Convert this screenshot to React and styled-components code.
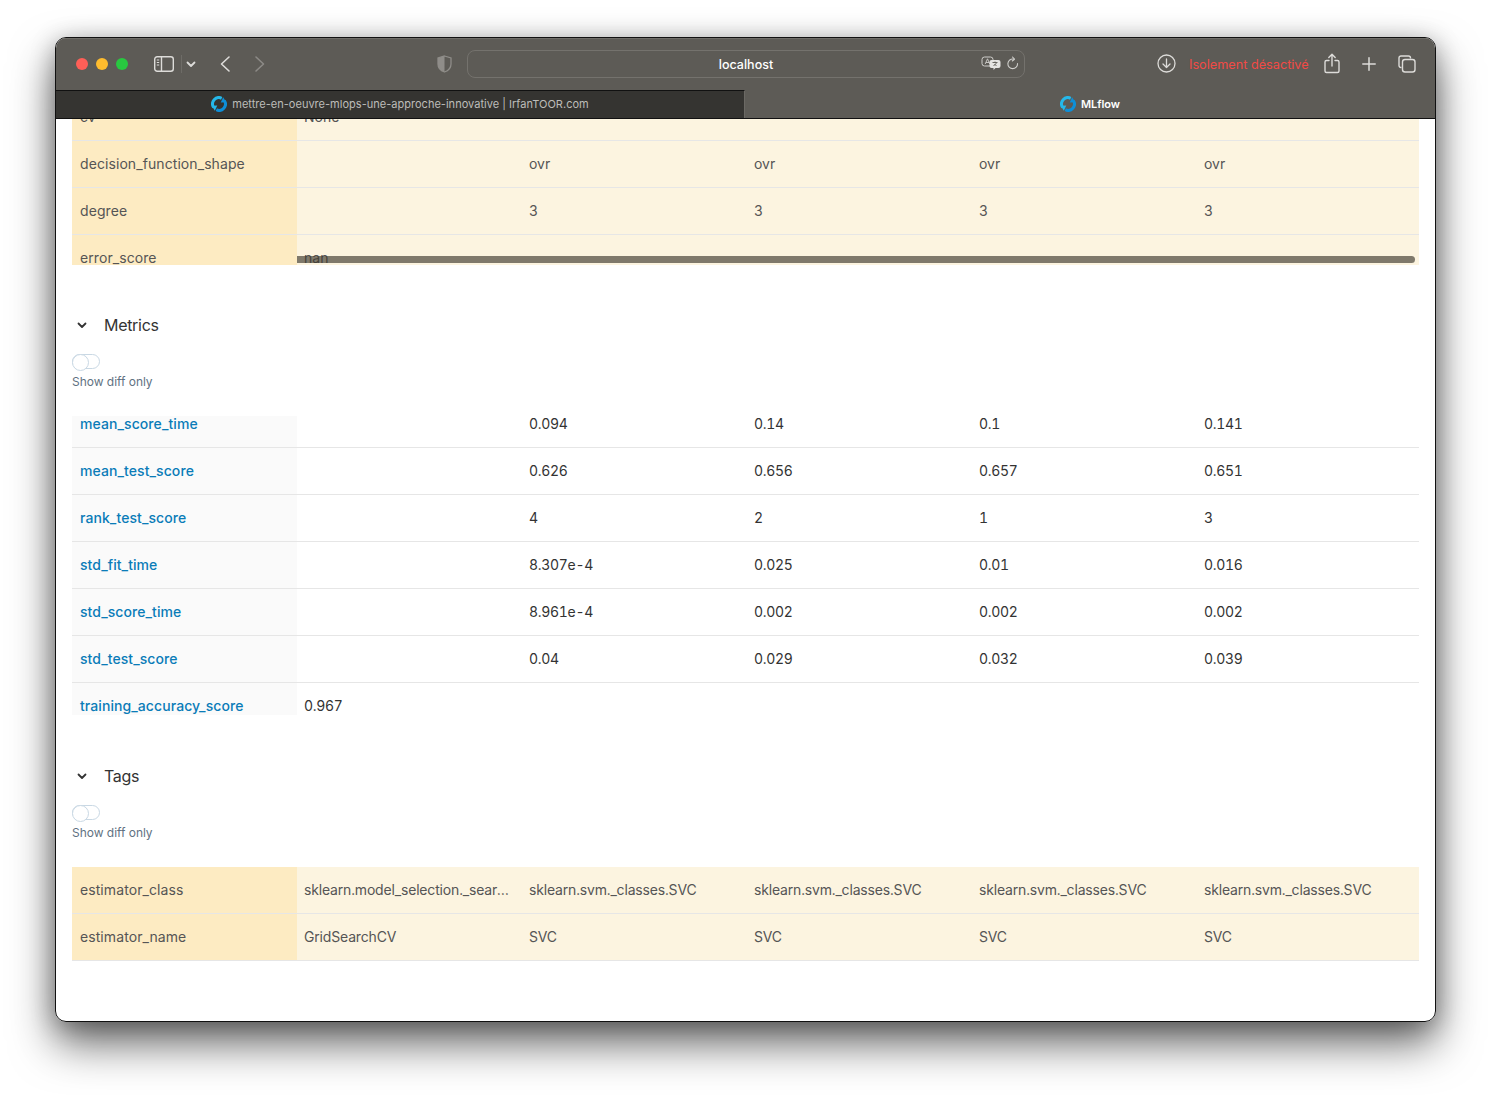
import React from "react";
import styled, { createGlobalStyle } from "styled-components";

const Global = createGlobalStyle`
  html, body { margin: 0; padding: 0; background: #fff; }
  body { font-family: Inter, "Liberation Sans", sans-serif; overflow: hidden; }
  * { box-sizing: border-box; }
`;
const Stage = styled.div`width: 1491px; height: 1095px; padding: 37px 55px 73px;`;
const Win = styled.div`
  width: 1381px; height: 985px; border: 1px solid #111; border-radius: 11px;
  overflow: hidden; background: #fff; display: flex; flex-direction: column;
`;
const Shadow = styled.div`border-radius: 11px; box-shadow: 0 22px 44px rgba(0,0,0,.58), 0 4px 24px rgba(0,0,0,.28);`;
const Toolbar = styled.div`
  height: 52px; padding-bottom: 2px; background: #5d5b56; display: flex; align-items: center; flex: none;
  border-top: 1px solid #6f6d68;
`;
const Lights = styled.div`display: flex; gap: 8px; margin-left: 20px; width: 78px;`;
const Light = styled.span`width: 12px; height: 12px; border-radius: 50%; background: ${p => p.$c};`;
const IconSlot = styled.span`
  display: flex; align-items: center; justify-content: center; flex: none;
  width: ${p => p.$w}px; margin-left: ${p => p.$ml || 0}px; color: ${p => p.$c || "#dddcd9"};
`;
const Divider = styled.span`width: 1px; height: 18px; margin-left: 7px; background: #6e6c67; flex: none;`;
const Url = styled.div`
  width: 558px; height: 28px; margin-left: 15px; padding-top: 1px; flex: none; border: 1px solid #74726d; border-radius: 8px;
  display: flex; align-items: center; position: relative; justify-content: center;
  color: #fff; font-size: 12.5px; font-weight: 500;
`;
const UrlIcons = styled.div`position: absolute; right: 5px; top: 5px; display: flex; align-items: center; gap: 6px; color: #cfcecb;`;
const Isolement = styled.span`color: #f24a45; font-size: 12.7px; padding-top: 1px; margin-left: 13px; width: 120px; white-space: nowrap; flex: none;`;
const Tabs = styled.div`height: 29px; display: flex; flex: none; border-bottom: 1px solid #111; background: #5d5b56;`;
const Tab = styled.div`
  width: ${p => p.$active ? 690 : 689}px; display: flex; align-items: center; justify-content: center; gap: 5px;
  font-size: 11px; white-space: nowrap; letter-spacing: ${p => p.$active ? "-.05px" : ".02px"};
  padding-bottom: ${p => p.$active ? 0 : 1}px;
  color: ${p => p.$active ? "#fff" : "#bdbcb9"}; font-weight: ${p => p.$active ? 600 : 400};
  background: ${p => p.$active ? "#5d5b56" : "#353431"};
  border-top: ${p => p.$active ? "none" : "1px solid #111"};
  border-right: ${p => p.$active ? "none" : "1px solid #6b6964"};
`;
const Content = styled.div`flex: 1; padding: 0 16px; overflow: hidden;`;
const Clip = styled.div`
  height: ${p => p.$h}px; width: 1347px; overflow: hidden; position: relative;
`;
const Rows = styled.div`margin-top: ${p => p.$top || 0}px;`;
const Row = styled.div`
  display: grid; grid-template-columns: repeat(5, 225px) 1fr; height: 47px; align-items: stretch;
  border-bottom: 1px solid #e6e6e6; font-size: 14px; line-height: 46px;
  font-variant-numeric: tabular-nums;
  background: ${p => p.$hl ? "#fcf4e0" : "transparent"};
`;
const Label = styled.div`
  padding-left: 8px; white-space: nowrap; letter-spacing: .08px;
  background: ${p => p.$hl ? "#fdebc2" : "#fafafa"};
  color: ${p => p.$hl ? "#555" : "#0a7cb8"};
  font-weight: ${p => p.$hl ? 400 : 500};
`;
const Cell = styled.div`
  padding-left: 7px; padding-right: 8px; white-space: nowrap; overflow: hidden; text-overflow: ellipsis;
  color: ${p => p.$hl ? "#555" : "#333"};
  letter-spacing: ${p => p.$tight ? "-.17px" : p.$hl ? "0" : "-.3px"};
`;
const Scrollbar = styled.div`
  position: absolute; left: 225px; right: 4px; bottom: 2px; height: 7px; border-radius: 0 4px 4px 0; background: rgba(60,55,45,.65);
`;
const Heading = styled.div`
  display: flex; align-items: center; height: 24px; margin-top: ${p => p.$mt}px;
  font-size: 16px; color: #333; letter-spacing: -.3px;
`;
const Chevron = styled.span`display: flex; width: 32px; padding-left: 4px; color: #333;`;
const Toggle = styled.div`
  width: 28px; height: 15px; border: 1px solid #c9d8e4; border-radius: 8px; margin-top: 17px; position: relative; background: #fff;
  &::before {
    content: ""; position: absolute; left: -1px; top: -1px; width: 15px; height: 15px; border-radius: 50%;
    border: 1px solid #c9d8e4; background: #fff;
  }
`;
const ToggleLabel = styled.div`font-size: 12px; color: #5f7282; line-height: 18px; margin-top: 4px; letter-spacing: -.03px;`;
const TableWrap = styled.div`margin-top: ${p => p.$mt}px;`;

const Favicon = () => (
  <svg width="16" height="16" viewBox="0 0 16 16" fill="none">
    <path d="M2.700 11.500A6.300 6.300 0 0 1 10.700 2.300" stroke="#25b8ea" strokeWidth="3" />
    <path d="M13.300 4.500A6.300 6.300 0 0 1 5.300 13.700" stroke="#0e8fd8" strokeWidth="3" />
    <path d="M0.800 9.800 6.300 9.600 3.800 14.800Z" fill="#25b8ea" />
    <path d="M15.200 6.200 9.700 6.400 12.200 1.200Z" fill="#0e8fd8" />
  </svg>
);
const Down = () => (
  <svg width="12" height="12" viewBox="0 0 12 12" fill="none" stroke="currentColor" strokeWidth="1.800" strokeLinecap="round" strokeLinejoin="round">
    <path d="M2.500 4.500 6 8l3.500-3.500" />
  </svg>
);

const Section = ({ title, mt }) => (
  <>
    <Heading $mt={mt}><Chevron><Down /></Chevron>{title}</Heading>
    <Toggle />
    <ToggleLabel>Show diff only</ToggleLabel>
  </>
);
const DataRow = ({ hl, tight, label, cells }) => (
  <Row $hl={hl}>
    <Label $hl={hl}>{label}</Label>
    {cells.map((c, i) => <Cell key={i} $hl={hl} $tight={tight}>{c}</Cell>)}
  </Row>
);

const params = [
  ["cv", ["None", "", "", "", ""]],
  ["decision_function_shape", ["", "ovr", "ovr", "ovr", "ovr"]],
  ["degree", ["", "3", "3", "3", "3"]],
  ["error_score", ["nan", "", "", "", ""]],
];
const metrics = [
  ["mean_score_time", ["", "0.094", "0.14", "0.1", "0.141"]],
  ["mean_test_score", ["", "0.626", "0.656", "0.657", "0.651"]],
  ["rank_test_score", ["", "4", "2", "1", "3"]],
  ["std_fit_time", ["", "8.307e-4", "0.025", "0.01", "0.016"]],
  ["std_score_time", ["", "8.961e-4", "0.002", "0.002", "0.002"]],
  ["std_test_score", ["", "0.04", "0.029", "0.032", "0.039"]],
  ["training_accuracy_score", ["0.967", "", "", "", ""]],
];
const svc = "sklearn.svm._classes.SVC";
const tags = [
  ["estimator_class", ["sklearn.model_selection._search.GridSearchCV", svc, svc, svc, svc]],
  ["estimator_name", ["GridSearchCV", "SVC", "SVC", "SVC", "SVC"]],
];

export default function App() {
  return (
    <Stage>
      <Global />
      <Shadow>
        <Win>
          <Toolbar>
            <Lights>
              <Light $c="#fe5f57" /><Light $c="#febc2e" /><Light $c="#28c840" />
            </Lights>
            <IconSlot $w={20}>
              <svg width="20" height="16" viewBox="0 0 20 16" fill="none" stroke="currentColor" strokeWidth="1.400">
                <rect x=".7" y=".7" width="18.600" height="14.600" rx="2.500" />
                <path d="M7.500 .7v14.600" />
                <path d="M2.800 4h2.400M2.800 6.500h2.400M2.800 9h2.400" strokeWidth="1" />
              </svg>
            </IconSlot>
            <Divider />
            <IconSlot $w={12} $ml={3}><Down /></IconSlot>
            <IconSlot $w={14} $ml={21}>
              <svg width="12" height="18" viewBox="0 0 12 18" fill="none" stroke="currentColor" strokeWidth="1.600" strokeLinecap="round" strokeLinejoin="round"><path d="M10 2 2.500 9l7.500 7" /></svg>
            </IconSlot>
            <IconSlot $w={14} $ml={21} $c="#8c8a86">
              <svg width="12" height="18" viewBox="0 0 12 18" fill="none" stroke="currentColor" strokeWidth="1.600" strokeLinecap="round" strokeLinejoin="round"><path d="M2 2l7.500 7L2 16" /></svg>
            </IconSlot>
            <IconSlot $w={16} $ml={169} $c="#8f8d89">
              <svg width="15" height="18" viewBox="0 0 15 18">
                <path d="M7.500 1 14 3v6c0 4-3 6.800-6.500 8C4 15.800 1 13 1 9V3Z" fill="none" stroke="currentColor" strokeWidth="1.300" />
                <path d="M7.500 1 1 3v6c0 4 3 6.800 6.500 8Z" fill="currentColor" />
              </svg>
            </IconSlot>
            <Url>
              localhost
              <UrlIcons>
                <svg width="20" height="15" viewBox="0 0 20 15" fill="none">
                  <rect x="1" y="1" width="11" height="9" rx="2.500" stroke="currentColor" strokeWidth="1" />
                  <path d="M4.200 8 6.500 2.800 8.800 8M5 6.500h3" stroke="currentColor" strokeWidth=".9" />
                  <path d="M10.500 4h7a2 2 0 0 1 2 2v4a2 2 0 0 1-2 2h-3l-2 2v-2h-2a2 2 0 0 1-2-2V6a2 2 0 0 1 2-2Z" fill="#e6e5e2" />
                  <path d="M11.500 6.500h5M14 5.500v1M12.500 10l3-3M15.500 10l-2-2" stroke="#5d5b56" strokeWidth=".9" />
                </svg>
                <svg width="12" height="14" viewBox="0 0 12 14" fill="none" stroke="currentColor" strokeWidth="1.100" strokeLinecap="round" strokeLinejoin="round">
                  <path d="M10.500 7.500a4.800 4.800 0 1 1-4-4.400" />
                  <path d="M5.500 1 7.500 3.200 5.300 5" />
                </svg>
              </UrlIcons>
            </Url>
            <IconSlot $w={20} $ml={131}>
              <svg width="19" height="19" viewBox="0 0 19 19" fill="none" stroke="currentColor" strokeWidth="1.300" strokeLinecap="round" strokeLinejoin="round">
                <circle cx="9.500" cy="9.500" r="8.500" />
                <path d="M9.500 5v8.500M6 10l3.500 3.500L13 10" />
              </svg>
            </IconSlot>
            <Isolement>Isolement désactivé</Isolement>
            <IconSlot $w={16} $ml={15}>
              <svg width="16" height="21" viewBox="0 0 16 21" fill="none" stroke="currentColor" strokeWidth="1.400" strokeLinecap="round" strokeLinejoin="round">
                <path d="M5 7.500H2.500a1.500 1.500 0 0 0-1.500 1.500v9a1.500 1.500 0 0 0 1.500 1.500h11A1.500 1.500 0 0 0 15 18V9a1.500 1.500 0 0 0-1.500-1.500H11" />
                <path d="M8 13V1.500M4.800 4.500 8 1.300l3.200 3.200" />
              </svg>
            </IconSlot>
            <IconSlot $w={14} $ml={22}>
              <svg width="14" height="14" viewBox="0 0 14 14" fill="none" stroke="currentColor" strokeWidth="1.500" strokeLinecap="round"><path d="M7 .8v12.400M.8 7h12.400" /></svg>
            </IconSlot>
            <IconSlot $w={18} $ml={22}>
              <svg width="18" height="18" viewBox="0 0 18 18" fill="none" stroke="currentColor" strokeWidth="1.400">
                <path d="M3.500 12.500H3A2 2 0 0 1 1 10.500V3a2 2 0 0 1 2-2h7.500a2 2 0 0 1 2 2v.5" />
                <rect x="4.500" y="4.500" width="12.500" height="12.500" rx="2.500" />
              </svg>
            </IconSlot>
          </Toolbar>
          <Tabs>
            <Tab><Favicon />mettre-en-oeuvre-mlops-une-approche-innovative | IrfanTOOR.com</Tab>
            <Tab $active><Favicon />MLflow</Tab>
          </Tabs>
          <Content>
            <Clip $h={146}>
              <Rows $top={-25}>
                {params.map(([l, c]) => <DataRow key={l} hl label={l} cells={c} />)}
              </Rows>
              <Scrollbar />
            </Clip>
            <Section title="Metrics" mt={48} />
            <TableWrap $mt={25}>
              <Clip $h={299}>
                <Rows $top={-15}>
                  {metrics.map(([l, c]) => <DataRow key={l} label={l} cells={c} />)}
                </Rows>
              </Clip>
            </TableWrap>
            <Section title="Tags" mt={49} />
            <TableWrap $mt={25}>
              <Rows>
                {tags.map(([l, c]) => <DataRow key={l} hl tight label={l} cells={c} />)}
              </Rows>
            </TableWrap>
          </Content>
        </Win>
      </Shadow>
    </Stage>
  );
}
